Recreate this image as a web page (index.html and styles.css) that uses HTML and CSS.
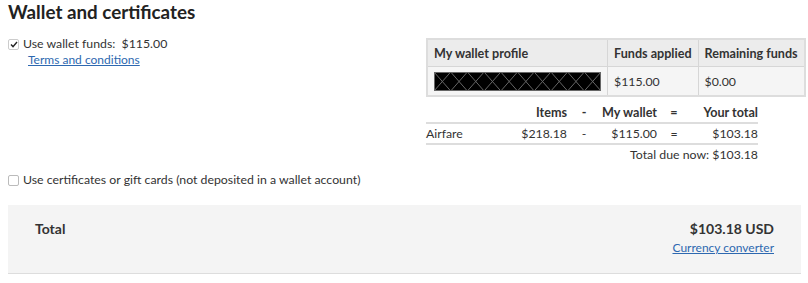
FILE: index.html
```html
<!DOCTYPE html>
<html>
<head>
<meta charset="utf-8">
<link rel="stylesheet" href="styles.css">
</head>
<body>
<h1 class="title">Wallet and certificates</h1>
<div class="wallet">
  <div class="wallet-left">
    <label class="check-row">
      <span class="box checked"><svg width="8" height="7" viewBox="0 0 8 7"><path d="M1 3.6 L3 5.6 L7 1" fill="none" stroke="#222" stroke-width="1.4"/></svg></span>
      <span>Use wallet funds:&nbsp; $115.00</span>
    </label>
    <a class="link terms" href="#">Terms and conditions</a>
  </div>
  <div class="wallet-right">
    <table class="profile">
      <tr class="head">
        <th class="c1">My wallet profile</th>
        <th class="c2">Funds applied</th>
        <th class="c3">Remaining funds</th>
      </tr>
      <tr class="body">
        <td class="c1"><span class="redact"><svg width="167" height="19" viewBox="0 0 167 19" preserveAspectRatio="none"><rect width="167" height="19" fill="#000"/><path d="M0 0 L16.7 19 M16.7 0 L33.4 19 M33.4 0 L50.1 19 M50.1 0 L66.8 19 M66.8 0 L83.5 19 M83.5 0 L100.2 19 M100.2 0 L116.9 19 M116.9 0 L133.6 19 M133.6 0 L150.3 19 M150.3 0 L167 19 M16.7 0 L0 19 M33.4 0 L16.7 19 M50.1 0 L33.4 19 M66.8 0 L50.1 19 M83.5 0 L66.8 19 M100.2 0 L83.5 19 M116.9 0 L100.2 19 M133.6 0 L116.9 19 M150.3 0 L133.6 19 M167 0 L150.3 19" stroke="#666" stroke-width="1" fill="none"/><rect x="0.5" y="0.5" width="166" height="18" fill="none" stroke="#666"/></svg></span></td>
        <td class="c2">$115.00</td>
        <td class="c3">$0.00</td>
      </tr>
    </table>
    <table class="summary">
      <tr class="shead">
        <th class="name"></th>
        <th class="num">Items</th>
        <th class="op">-</th>
        <th class="num2">My wallet</th>
        <th class="op">=</th>
        <th class="num3">Your total</th>
      </tr>
      <tr class="srow">
        <td class="name">Airfare</td>
        <td class="num">$218.18</td>
        <td class="op">-</td>
        <td class="num2">$115.00</td>
        <td class="op">=</td>
        <td class="num3">$103.18</td>
      </tr>
      <tr class="sdue">
        <td colspan="6">Total due now: $103.18</td>
      </tr>
    </table>
  </div>
</div>
<label class="check-row cert">
  <span class="box"></span>
  <span>Use certificates or gift cards (not deposited in a wallet account)</span>
</label>
<div class="total">
  <div class="total-label">Total</div>
  <div class="total-right">
    <div class="total-amount">$103.18 USD</div>
    <a class="link" href="#">Currency converter</a>
  </div>
</div>
</body>
</html>
```
FILE: styles.css
```css
body {
  margin: 0;
  padding: 0 7px 0 8px;
  font-family: "Lato", "Noto Sans", sans-serif;
  font-size: 12.3px;
  color: #333;
  background: #fff;
}
.title {
  margin: 0;
  padding-top: 1px;
  font-size: 18.8px;
  font-weight: 700;
  color: #222;
  line-height: 22px;
}
.wallet {
  display: flex;
  justify-content: space-between;
  margin-top: 13px;
}
.check-row {
  display: flex;
  align-items: center;
  gap: 4px;
  line-height: 16px;
}
.box {
  width: 9px;
  height: 9px;
  border: 1px solid #bbb;
  border-radius: 2px;
  display: inline-flex;
  align-items: center;
  justify-content: center;
  background: #fff;
}
.box.checked {
  border-color: #ccc;
}
.link {
  color: #2d68b0;
  text-decoration: underline;
  font-size: 12px;
}
.terms {
  display: block;
  margin-left: 20px;
  line-height: 15px;
}
.wallet-right {
  width: 375px;
  padding-top: 2px;
}
.profile {
  border-collapse: collapse;
  width: 375px;
  border: 2px solid #ddd;
}
.profile th, .profile td {
  border: 1px solid #d6d6d6;
  text-align: left;
  padding: 0 6px;
  white-space: nowrap;
}
.profile th {
  background: #ececec;
  font-weight: 700;
  font-size: 12.6px;
  height: 26px;
  color: #333;
}
.profile td {
  background: #f5f5f5;
  height: 28px;
}
.profile .c1 { width: 165px; }
.profile .c2 { width: 77px; }
.redact {
  display: block;
  line-height: 0;
}
.summary {
  border-collapse: collapse;
  width: 332px;
  margin-top: 5px;
}
.summary th, .summary td {
  padding: 0;
  white-space: nowrap;
}
.summary th {
  font-weight: 700;
  font-size: 12.6px;
}
.summary .name { text-align: left; width: 60px; }
.summary .num { text-align: right; width: 81px; }
.summary .op { text-align: center; width: 34px; }
.summary .num2 { text-align: right; width: 56px; }
.summary .num3 { text-align: right; }
.shead th { border-bottom: 2px solid #ddd; height: 20px; }
.srow td { border-bottom: 2px solid #ddd; height: 19px; }
.sdue td { text-align: right; height: 18px; }
.cert {
  margin-top: 9px;
}
.total {
  margin-top: 17px;
  background: #f4f4f4;
  border-bottom: 1px solid #ddd;
  display: flex;
  justify-content: space-between;
  align-items: flex-start;
  padding: 15px 27px 17px 27px;
  height: 36px;
}
.total-label, .total-amount {
  font-weight: 700;
  font-size: 14px;
  color: #333;
  line-height: 17px;
}
.total-right {
  text-align: right;
  display: flex;
  flex-direction: column;
  align-items: flex-end;
  gap: 3px;
}
```
